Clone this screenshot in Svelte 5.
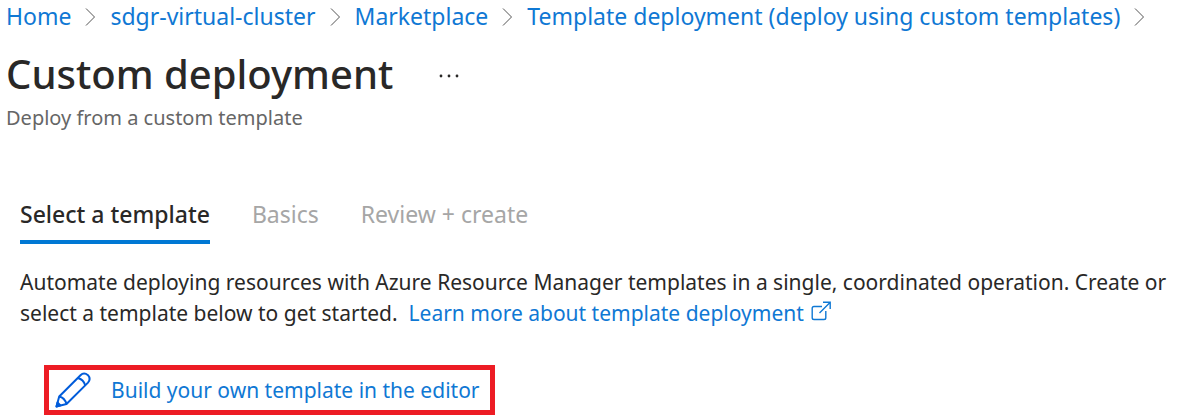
<script>
	const crumbs = [
		'Home',
		'sdgr-virtual-cluster',
		'Marketplace',
		'Template deployment (deploy using custom templates)',
	];

	const tabs = ['Select a template', 'Basics', 'Review + create'];

	let active = $state(tabs[0]);
</script>

<div class="blade">
	<nav class="crumbs" aria-label="Breadcrumb">
		{#each crumbs as crumb}
			<a href="#top">{crumb}</a>
			<svg class="chevron" viewBox="0 0 11 20" aria-hidden="true">
				<path d="M1 1.5 L9.5 10 L1 18.5" />
			</svg>
		{/each}
	</nav>

	<header>
		<div class="title">
			<h1>Custom deployment</h1>
			<button class="more" aria-label="More actions">
				<svg viewBox="0 0 20 4" aria-hidden="true">
					<circle cx="2" cy="2" r="1.4" />
					<circle cx="10" cy="2" r="1.4" />
					<circle cx="18" cy="2" r="1.4" />
				</svg>
			</button>
		</div>
		<p class="subtitle">Deploy from a custom template</p>
	</header>

	<main>
		<div class="tabs" role="tablist">
			{#each tabs as tab}
				<button
					role="tab"
					class:active={tab === active}
					aria-selected={tab === active}
					onclick={() => (active = tab)}
				>{tab}</button>
			{/each}
		</div>

		<p class="intro">
			Automate deploying resources with Azure Resource Manager templates in a single, coordinated operation. Create or select a template below to get started.&nbsp;
			<a href="#learn">Learn more about template deployment<svg class="external" viewBox="0 0 20 20" aria-hidden="true">
				<path d="M11 5.5 H3 Q1.2 5.5 1.2 7.3 V16.7 Q1.2 18.5 3 18.5 H13 Q14.8 18.5 14.8 16.7 V10" />
				<path d="M8.5 12 L19 1.5 M12 1.2 H19.2 V8" />
			</svg></a>
		</p>

		<a class="build" href="#editor">
			<svg class="pencil" viewBox="0 0 36 36" aria-hidden="true">
				<path d="M1.5 34.5 L4.2 24.5 L25.5 3.2 Q29 -0.2 33 3.2 Q36.2 7 33 10.6 L11.5 32 Z" />
				<path d="M4.2 24.5 Q9.5 25.5 11.5 32 M22.8 6 Q28.5 7.5 30.2 13.2" />
				<path class="tip" d="M1.5 34.5 L2.5 30.5 L5.5 33.4 Z" />
			</svg>
			Build your own template in the editor
		</a>
	</main>
</div>

<style>
	:global(body) {
		background: #fff;
	}

	.blade {
		font-family: "Segoe UI", "Noto Sans", "Open Sans", sans-serif;
		font-size: 21px;
		color: #292827;
	}

	a {
		color: #0f78d4;
		text-decoration: none;
	}

	a:hover {
		text-decoration: underline;
	}

	button {
		font: inherit;
		color: inherit;
		background: none;
		border: 0;
		padding: 0;
		cursor: pointer;
	}

	h1, p {
		margin: 0;
	}

	svg {
		fill: none;
		stroke: currentColor;
	}

	.crumbs {
		display: flex;
		align-items: center;
		gap: 14px;
		padding: 0 6px;
		font-size: 23px;
		line-height: 32px;
		white-space: nowrap;
	}

	.chevron {
		flex: none;
		width: 11px;
		height: 20px;
		margin-top: 2px;
		color: #555;
	}

	header {
		padding: 14px 6px 0;
	}

	.title {
		display: flex;
		align-items: center;
		gap: 46px;
	}

	h1 {
		font-size: 40px;
		font-weight: 500;
		line-height: 56px;
	}

	.more {
		display: flex;
		padding-top: 4px;
	}

	.more svg {
		width: 20px;
		height: 4px;
		fill: #292827;
		stroke: none;
	}

	.subtitle {
		font-size: 20px;
		line-height: 32px;
		color: #666;
	}

	main {
		padding: 63px 0 0 20px;
	}

	.tabs {
		display: flex;
		gap: 42px;
	}

	.tabs button {
		padding-bottom: 9px;
		border-bottom: 4px solid transparent;
		font-size: 23px;
		line-height: 34px;
		color: #a6a6a6;
	}

	.tabs .active {
		font-weight: 500;
		color: #292827;
		border-color: #0078d4;
	}

	.intro {
		padding-top: 23px;
		line-height: 31px;
	}

	.external {
		width: 20px;
		height: 20px;
		margin-left: 7px;
		stroke-width: 1.4;
	}

	.build {
		display: inline-flex;
		align-items: center;
		gap: 20px;
		margin: 36px 0 0 24px;
		padding: 0 10px 0 6px;
		border: 5px solid #ed1c24;
		line-height: 40px;
	}

	.pencil {
		width: 36px;
		height: 36px;
		color: #015cda;
		stroke-width: 2;
		stroke-linejoin: round;
	}

	.tip {
		fill: currentColor;
	}
</style>
